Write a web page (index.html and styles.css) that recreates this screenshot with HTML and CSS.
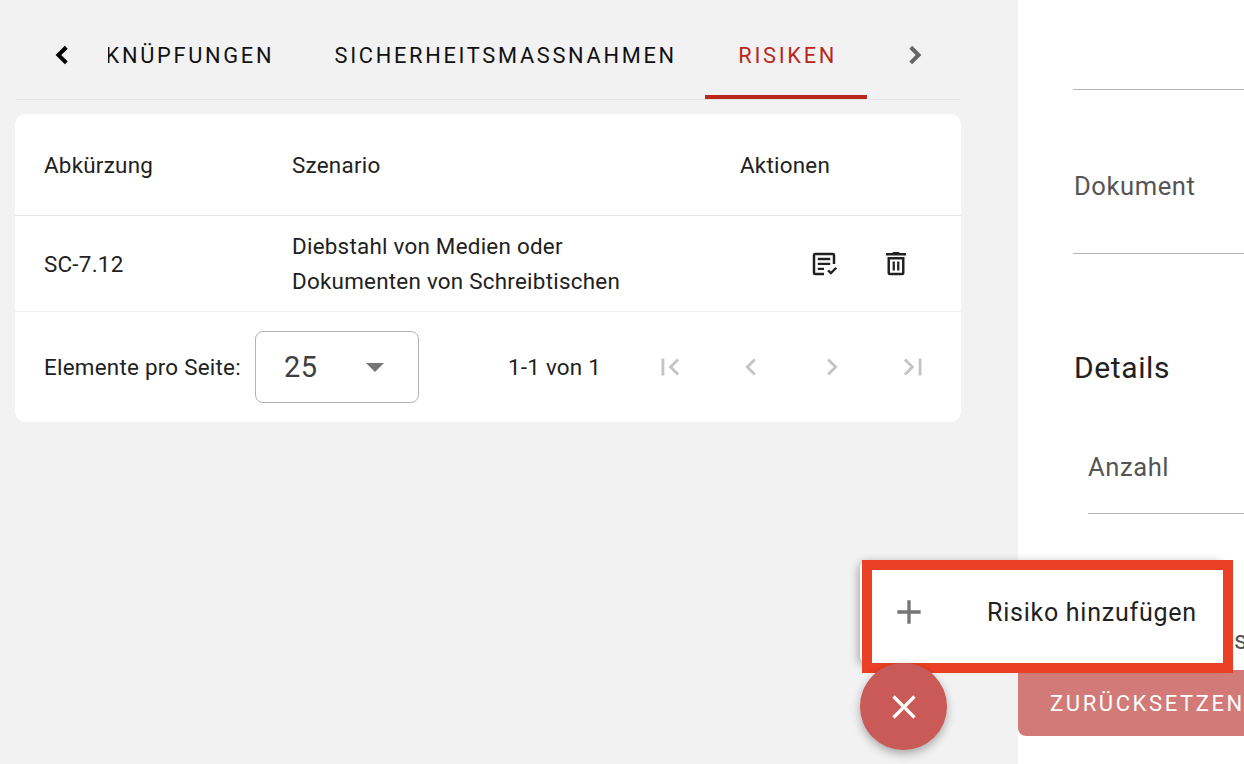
FILE: index.html
```html
<!DOCTYPE html>
<html lang="de">
<head>
<meta charset="utf-8">
<title>Risiken</title>
<link rel="stylesheet" href="styles.css">
</head>
<body>
<div class="app">
  <main class="main">
    <div class="tabs">
      <button class="tab-arrow tab-arrow-left" aria-label="zurück">
        <svg width="24" height="24" viewBox="0 0 24 24"><path d="M14 5.500 16 7.500 11.500 12 16 16.500 14 18.500 7.500 12z" fill="#000"/></svg>
      </button>
      <div class="tab-list">
        <div class="tab-track">
          <span class="tab tab-first">VERKNÜPFUNGEN</span>
          <span class="tab tab-second">SICHERHEITSMASSNAHMEN</span>
          <span class="tab tab-active">RISIKEN</span>
        </div>
      </div>
      <button class="tab-arrow tab-arrow-right" aria-label="weiter">
        <svg width="24" height="24" viewBox="0 0 24 24"><path d="M10 5.500 8 7.500 12.500 12 8 16.500 10 18.500 16.500 12z" fill="#666"/></svg>
      </button>
    </div>

    <section class="card">
      <div class="row row-head">
        <div class="col-a">Abkürzung</div>
        <div class="col-b">Szenario</div>
        <div class="col-c">Aktionen</div>
      </div>
      <div class="row row-body">
        <div class="col-a">SC-7.12</div>
        <div class="col-b">Diebstahl von Medien oder<br>Dokumenten von Schreibtischen</div>
        <div class="col-c actions">
          <svg width="30" height="30" viewBox="0 0 24 24" fill="#212121"><path d="M19 3H5a2 2 0 0 0-2 2v14a2 2 0 0 0 2 2h7v-2H5V5h14v7h2V5a2 2 0 0 0-2-2z"/><path d="M7 7h10v2H7zM7 11h10v1.800H7zM7 15h5v1.800H7z"/><path d="m14.600 17.800 1.400-1.400 1.500 1.500 3.600-3.600 1.400 1.400-5 5z"/></svg>
          <svg width="30" height="30" viewBox="0 0 24 24" fill="#212121"><path d="M15 3.200 14.200 2.400H9.800L9 3.200H4v2h16v-2zM5.200 19a2 2 0 0 0 2 2h9.600a2 2 0 0 0 2-2V6.400H5.200zm2-10.600h9.600V19H7.200z"/><path d="M9.300 10h1.800v7.200H9.300zM12.900 10h1.800v7.200h-1.800z"/></svg>
        </div>
      </div>
      <div class="pager">
        <span class="pager-label">Elemente pro Seite:</span>
        <div class="select"><span>25</span><i class="caret"></i></div>
        <span class="pager-range">1-1 von 1</span>
        <div class="pager-btns">
          <svg width="34" height="34" viewBox="0 0 24 24" fill="#c4c4c4"><path d="M18.400 16.600 13.800 12l4.600-4.600L17 6l-6 6 6 6zM6 6h2v12H6z"/></svg>
          <svg width="34" height="34" viewBox="0 0 24 24" fill="#c4c4c4"><path d="M15.400 7.400 14 6l-6 6 6 6 1.400-1.400L10.800 12z"/></svg>
          <svg width="34" height="34" viewBox="0 0 24 24" fill="#c4c4c4"><path d="M8.600 16.600 10 18l6-6-6-6-1.400 1.400 4.600 4.600z"/></svg>
          <svg width="34" height="34" viewBox="0 0 24 24" fill="#c4c4c4"><path d="M5.600 7.400 10.200 12l-4.600 4.600L7 18l6-6-6-6zM16 6h2v12h-2z"/></svg>
        </div>
      </div>
    </section>
  </main>

  <aside class="side">
    <div class="field field-top"></div>
    <div class="field field-doc"><span>Dokument</span></div>
    <h2 class="side-title">Details</h2>
    <div class="field field-count"><span>Anzahl</span></div>
    <div class="side-letter">s</div>
    <div class="reset">ZURÜCKSETZEN</div>
  </aside>
</div>

<div class="fab-menu">
  <svg class="plus" width="40" height="40" viewBox="0 0 24 24" fill="#757575"><path d="M19 13h-6v6h-2v-6H5v-2h6V5h2v6h6z"/></svg>
  <span class="fab-label">Risiko hinzufügen</span>
</div>
<div class="highlight"></div>
<button class="fab" aria-label="schließen">
  <svg width="40" height="40" viewBox="0 0 24 24" fill="#fff"><path d="M19 6.410 17.590 5 12 10.590 6.410 5 5 6.410 10.590 12 5 17.590 6.410 19 12 13.410 17.590 19 19 17.590 13.410 12z"/></svg>
</button>
</body>
</html>
```
FILE: styles.css
```css
* { box-sizing: border-box; }
html, body { margin: 0; height: 100%; overflow: hidden; }
body { font-family: Roboto, "Liberation Sans", sans-serif; color: #212121; background: #fff; }
.app { display: flex; width: 1244px; height: 764px; }
.main { width: 1018px; flex: none; background: #f2f2f2; padding: 0 57px 0 15px; }
.side { flex: 1; min-width: 0; background: #fff; overflow: hidden; position: relative; padding-left: 55px; }

.tabs { display: flex; align-items: center; height: 100px; border-bottom: 1px solid #e2e2e2; margin-left: 1px; width: 944px; }
.tab-arrow { border: 0; background: none; padding: 10px 0 0; display: flex; align-items: center; justify-content: center; flex: none; height: 99px; }
.tab-arrow svg { width: 34px; height: 34px; }
.tab-arrow-left { width: 92px; }
.tab-arrow-right { width: 90px; }
.tab-list { flex: 1; overflow: hidden; height: 99px; min-width: 0; }
.tab-track { display: flex; height: 99px; margin-left: -50.300px; }
.tab { flex: none; display: flex; align-items: center; justify-content: center; height: 99px; padding-top: 12px; font-size: 21.800px; letter-spacing: 2.700px; color: #111; white-space: nowrap; }
.tab-second { margin-left: 60.400px; }
.tab-active { margin-left: 28.400px; width: 162px; color: #b9281b; border-bottom: 4px solid #b9281b; padding: 16px 0 0 3px; }

.card { margin-top: 14px; width: 946px; height: 308px; background: #fff; border-radius: 11px; overflow: hidden; font-size: 22.400px; letter-spacing: .25px; }
.row { display: flex; align-items: center; padding-left: 29px; }
.row-head { height: 102px; border-bottom: 1px solid #e4e4e4; }
.row-body { height: 96px; border-bottom: 1px solid #f0f0f0; line-height: 35px; }
.row-body .col-a { padding-top: 2px; }
.col-a { width: 248px; flex: none; }
.col-b { width: 448px; flex: none; }
.actions { display: flex; gap: 42px; margin-left: 69px; }
.pager { display: flex; align-items: center; height: 110px; padding-left: 29px; }
.pager-label { width: 211px; flex: none; }
.select { width: 164px; height: 72px; flex: none; border: 1px solid #b3b3b3; border-radius: 8px; display: flex; align-items: center; justify-content: space-between; padding: 0 34px 0 28px; font-size: 29px; letter-spacing: .5px; color: #3f3f3f; }
.caret { width: 0; height: 0; border-left: 9px solid transparent; border-right: 9px solid transparent; border-top: 9px solid #757575; }
.pager-range { margin-left: 89px; width: 134px; flex: none; }
.pager-btns { display: flex; gap: 47px; margin-left: 11px; }

.field { border-bottom: 1px solid #b5b5b5; font-size: 25.600px; letter-spacing: .55px; color: #555; }
.field-top { height: 90px; }
.field-doc { height: 164px; padding: 81px 0 0 1px; }
.side-title { margin: 94px 0 0; padding-left: 1px; height: 40px; line-height: 40px; font-size: 30px; letter-spacing: .6px; font-weight: 400; color: #212121; }
.field-count { margin: 0 0 0 15px; height: 126px; padding-top: 64px; }
.side-letter { position: absolute; left: 216px; top: 625px; font-size: 25.600px; color: #555; }
.reset { position: absolute; left: 0; top: 670px; width: 240px; height: 66px; background: #d27a77; color: #fff; border-radius: 0 0 0 8px; display: flex; align-items: center; padding-left: 32px; font-size: 22px; letter-spacing: 2.600px; white-space: nowrap; overflow: hidden; }

.fab-menu { position: absolute; left: 860px; top: 560px; width: 366px; height: 104px; background: #fff; border-radius: 8px; box-shadow: -2px 2px 8px rgba(0,0,0,.3); display: flex; align-items: center; padding-left: 28.500px; }
.plus { flex: none; }
.fab-label { margin-left: 58.500px; font-size: 25px; letter-spacing: .75px; color: #212121; }
.highlight { position: absolute; left: 862px; top: 560px; width: 371px; height: 113px; border: 10px solid #ea4025; }
.fab { position: absolute; left: 860px; top: 663px; width: 87px; height: 87px; border: 0; border-radius: 50%; background: #c95a57; padding: 0; display: flex; align-items: center; justify-content: center; box-shadow: 0 4px 10px rgba(0,0,0,.3); }
```
